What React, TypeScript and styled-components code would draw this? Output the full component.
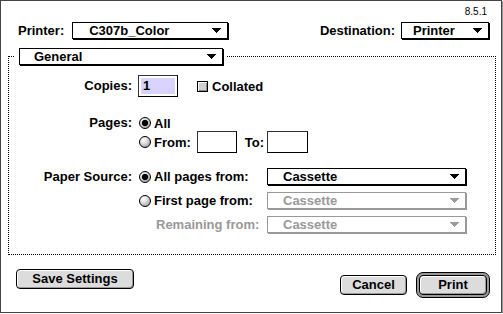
import React from 'react';
import styled, { createGlobalStyle } from 'styled-components';

const Global = createGlobalStyle`
  html, body { margin: 0; padding: 0; background: #fff; }
  body { font-family: "Liberation Sans", Arial, sans-serif; }
`;

const Window = styled.div`
  box-sizing: border-box;
  width: 502px;
  height: 313px;
  border: 1px solid #444;
  box-shadow: 1px 1px 0 #9a9a9a;
  background: #fff;
  display: flex;
  flex-direction: column;
  font: bold 13px/15px "Liberation Sans", Arial, sans-serif;
  color: #000;
`;

const Version = styled.div`
  font: normal 10px/12px "Liberation Sans", Arial, sans-serif;
  text-align: right;
  padding: 5px 14px 0 0;
`;

const HeaderRow = styled.div`
  display: flex;
  justify-content: space-between;
  align-items: center;
  margin-top: 4px;
  padding: 0 12px 0 17px;
`;

const Field = styled.div<{ $gap: number }>`
  display: flex;
  align-items: center;
  gap: ${(p) => p.$gap}px;
`;

const Label = styled.span<{ $disabled?: boolean }>`
  white-space: nowrap;
  color: ${(p) => (p.$disabled ? '#999' : '#000')};
`;

const Popup = styled.div<{ $w: number; $pad: number; $disabled?: boolean }>`
  box-sizing: border-box;
  flex: none;
  width: ${(p) => p.$w}px;
  height: 17px;
  border: 1px solid ${(p) => (p.$disabled ? '#999' : '#000')};
  box-shadow: 1px 1px 0 ${(p) => (p.$disabled ? '#999' : '#000')};
  background: #fff;
  display: flex;
  align-items: center;
  justify-content: space-between;
  padding: 0 6px 0 ${(p) => p.$pad}px;
  color: ${(p) => (p.$disabled ? '#999' : '#000')};
  white-space: nowrap;
`;

const ArrowSvg = styled.svg`
  display: block;
  flex: none;
`;

const Arrow = ({ color = '#000' }: { color?: string }) => (
  <ArrowSvg width="9" height="5" viewBox="0 0 9 5" shapeRendering="crispEdges">
    <rect x="0" y="0" width="9" height="1" fill={color} />
    <rect x="1" y="1" width="7" height="1" fill={color} />
    <rect x="2" y="2" width="5" height="1" fill={color} />
    <rect x="3" y="3" width="3" height="1" fill={color} />
    <rect x="4" y="4" width="1" height="1" fill={color} />
  </ArrowSvg>
);

const Group = styled.fieldset`
  display: block;
  min-width: 0;
  margin: 9px 5px 0 7px;
  padding: 10px 0 21px 0;
  border: 1px dotted #000;
`;

const Legend = styled.legend`
  margin-left: 6px;
  padding: 0 4px;
`;

const Row = styled.div<{ $mt: number }>`
  display: flex;
  align-items: flex-start;
  gap: 6px;
  margin-top: ${(p) => p.$mt}px;
`;

const RowLabel = styled.div<{ $h: number }>`
  flex: none;
  width: 123px;
  text-align: right;
  white-space: nowrap;
  line-height: ${(p) => p.$h}px;
`;

const Stack = styled.div<{ $gap: number }>`
  display: flex;
  flex-direction: column;
  gap: ${(p) => p.$gap}px;
`;

const Line = styled.div<{ $h: number; $gap?: number }>`
  display: flex;
  align-items: center;
  height: ${(p) => p.$h}px;
  gap: ${(p) => p.$gap ?? 0}px;
`;

const Choice = styled.div<{ $indent?: number; $disabled?: boolean }>`
  box-sizing: border-box;
  flex: none;
  width: 129px;
  display: flex;
  align-items: center;
  gap: 3px;
  padding-left: ${(p) => p.$indent ?? 0}px;
  white-space: nowrap;
  color: ${(p) => (p.$disabled ? '#999' : '#000')};
`;

const Radio = styled.span<{ $on?: boolean }>`
  box-sizing: border-box;
  flex: none;
  display: inline-block;
  width: 12px;
  height: 12px;
  margin-left: 1px;
  border-radius: 50%;
  border: 1px solid #000;
  background: ${(p) =>
    p.$on
      ? 'radial-gradient(circle at 50% 50%, #000 0 2.6px, #333 3px, rgba(0,0,0,0) 3.6px), radial-gradient(circle at 35% 30%, #fff 0, #ddd 40%, #8a8a8a 100%)'
      : 'radial-gradient(circle at 35% 30%, #fff 0, #e2e2e2 35%, #8a8a8a 100%)'};
`;

const Check = styled.span`
  box-sizing: border-box;
  flex: none;
  display: inline-block;
  width: 11px;
  height: 11px;
  border: 1px solid #000;
  background: #d0d0d0;
  box-shadow: inset 1px 1px 0 #fff, inset -1px -1px 0 #8a8a8a;
`;

const TextBox = styled.div<{ $w: number; $ml?: number }>`
  box-sizing: border-box;
  flex: none;
  width: ${(p) => p.$w}px;
  height: 22px;
  margin-left: ${(p) => p.$ml ?? 0}px;
  border: 1px solid #000;
  border-top-color: #333;
  border-left-color: #333;
  background: #fff;
  padding: 2px;
  display: flex;
`;

const Selection = styled.span`
  flex: 1;
  background: #d9d3fd;
  padding-left: 2px;
  line-height: 16px;
`;

const Text = styled.span<{ $ml?: number }>`
  white-space: nowrap;
  margin-left: ${(p) => p.$ml ?? 0}px;
`;

const Footer = styled.div`
  display: flex;
  justify-content: space-between;
  align-items: flex-start;
  margin-top: 14px;
  padding: 0 11px 0 15px;
`;

const ButtonGroup = styled.div`
  display: flex;
  align-items: center;
  gap: 9px;
  margin-top: 3px;
`;

const Button = styled.button<{ $w: number }>`
  box-sizing: border-box;
  width: ${(p) => p.$w}px;
  height: 20px;
  margin: 0;
  padding: 0;
  border: 1px solid #000;
  border-radius: 4px;
  background: #dcdcdc;
  box-shadow: inset 1px 1px 0 #fff, inset -1px -1px 0 #999;
  font: bold 13px/16px "Liberation Sans", Arial, sans-serif;
  color: #000;
`;

const DefaultRing = styled.div`
  display: flex;
  border: 1px solid #000;
  border-radius: 7px;
  padding: 2px;
  background: #9a9a9a;
`;

export default function App() {
  return (
    <>
      <Global />
      <Window>
        <Version>8.5.1</Version>
        <HeaderRow>
          <Field $gap={8}>
            <Label>Printer:</Label>
            <Popup $w={156} $pad={16}>
              <span>C307b_Color</span>
              <Arrow />
            </Popup>
          </Field>
          <Field $gap={6}>
            <Label>Destination:</Label>
            <Popup $w={88} $pad={11}>
              <span>Printer</span>
              <Arrow />
            </Popup>
          </Field>
        </HeaderRow>

        <Group>
          <Legend>
            <Popup $w={204} $pad={14}>
              <span>General</span>
              <Arrow />
            </Popup>
          </Legend>

          <Row $mt={0}>
            <RowLabel $h={22}>Copies:</RowLabel>
            <Line $h={22} $gap={4}>
              <TextBox $w={40}>
                <Selection>1</Selection>
              </TextBox>
              <Check style={{ marginLeft: 15 }} />
              <Text>Collated</Text>
            </Line>
          </Row>

          <Row $mt={19}>
            <RowLabel $h={14}>Pages:</RowLabel>
            <Stack $gap={1}>
              <Line $h={14} $gap={3}>
                <Radio $on />
                <Text>All</Text>
              </Line>
              <Line $h={22} $gap={3}>
                <Radio />
                <Text>From:</Text>
                <TextBox $w={40} $ml={3} />
                <Text $ml={5}>To:</Text>
                <TextBox $w={41} />
              </Line>
            </Stack>
          </Row>

          <Row $mt={15}>
            <RowLabel $h={17}>Paper Source:</RowLabel>
            <Stack $gap={7}>
              <Line $h={17}>
                <Choice>
                  <Radio $on />
                  All pages from:
                </Choice>
                <Popup $w={199} $pad={15}>
                  <span>Cassette</span>
                  <Arrow />
                </Popup>
              </Line>
              <Line $h={17}>
                <Choice>
                  <Radio />
                  First page from:
                </Choice>
                <Popup $w={199} $pad={15} $disabled>
                  <span>Cassette</span>
                  <Arrow color="#999" />
                </Popup>
              </Line>
              <Line $h={17}>
                <Choice $indent={18} $disabled>
                  Remaining from:
                </Choice>
                <Popup $w={199} $pad={15} $disabled>
                  <span>Cassette</span>
                  <Arrow color="#999" />
                </Popup>
              </Line>
            </Stack>
          </Row>
        </Group>

        <Footer>
          <Button $w={118}>Save Settings</Button>
          <ButtonGroup>
            <Button $w={67}>Cancel</Button>
            <DefaultRing>
              <Button $w={68}>Print</Button>
            </DefaultRing>
          </ButtonGroup>
        </Footer>
      </Window>
    </>
  );
}
